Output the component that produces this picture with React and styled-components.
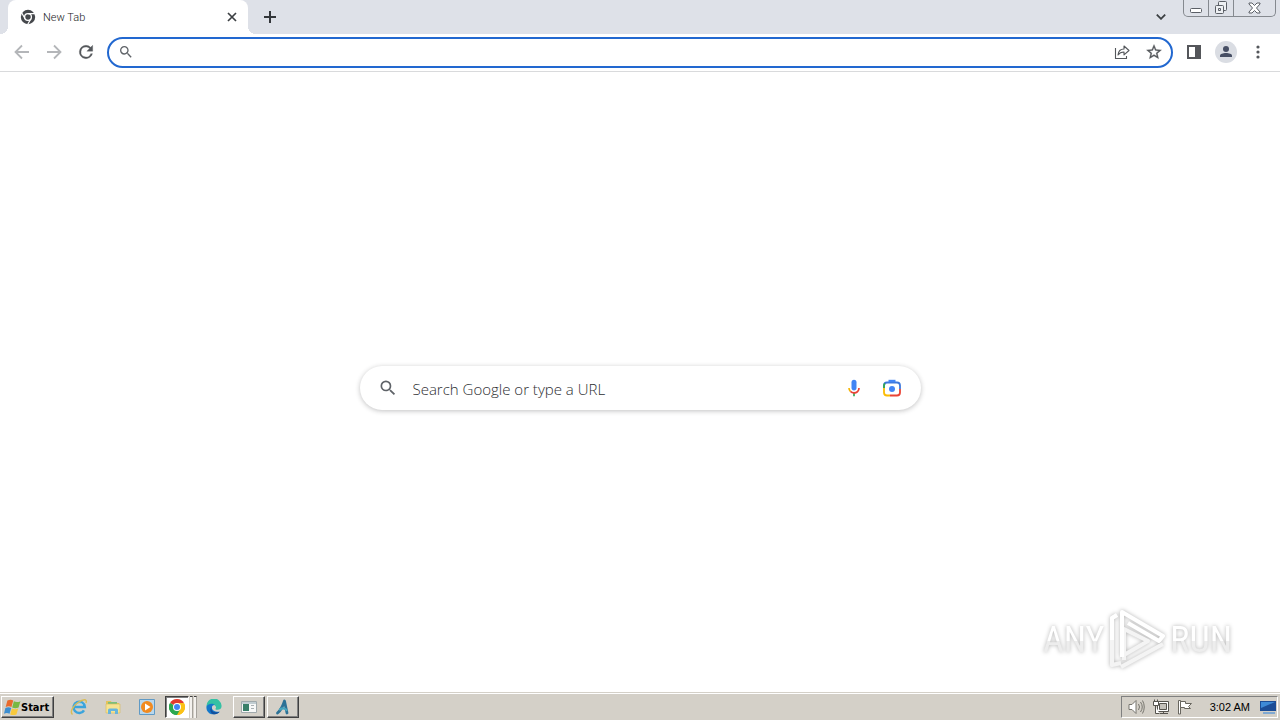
import React, { useState } from "react";
import styled, { createGlobalStyle, css } from "styled-components";

//styles
const GlobalStyle = createGlobalStyle`
    * {
        box-sizing: border-box;
    }

    body {
        margin: 0;
        background: #ffffff;
        font-family: Roboto, "Liberation Sans", sans-serif;
    }

    button {
        padding: 0;
        border: none;
        background: transparent;
        font: inherit;
    }

    svg {
        display: block;
        flex: none;
    }
`;

const Desktop = styled.div`
    display: flex;
    flex-direction: column;
    min-height: 100vh;
`;

const TabStrip = styled.header`
    display: flex;
    align-items: stretch;
    height: 34px;
    padding-left: 8px;
    background: #dee1e8;
`;

const Tab = styled.div`
    position: relative;
    display: flex;
    align-items: center;
    width: 240px;
    padding: 0 8px 0 12px;
    background: #ffffff;
    border-radius: 8px 8px 0 0;
    color: #202124;
    font-size: 11px;
    font-weight: 300;

    &::before,
    &::after {
        content: "";
        position: absolute;
        bottom: 0;
        width: 8px;
        height: 8px;
    }

    &::before {
        left: -8px;
        background: radial-gradient(circle at 0 0, transparent 8px, #ffffff 8px);
    }

    &::after {
        right: -8px;
        background: radial-gradient(circle at 100% 0, transparent 8px, #ffffff 8px);
    }
`;

const TabTitle = styled.span`
    flex: 1;
    margin-left: 7px;
`;

const IconButton = styled.button`
    display: flex;
    flex: none;
    align-items: center;
    justify-content: center;
    width: ${({ $size }) => $size || 32}px;
    height: ${({ $size }) => $size || 30}px;
    color: ${({ $muted }) => ($muted ? "#b4b6b9" : "#54575b")};
    border-radius: 50%;
`;

const NewTabButton = styled(IconButton)`
    align-self: center;
    margin-left: 6px;
    color: #33363a;
`;

const TabSearchButton = styled(IconButton)`
    align-self: center;
    margin: 0 6px 0 auto;
    color: #3c4043;
`;

const WindowControls = styled.div`
    display: flex;
    width: 93px;
    height: 17px;
    margin-right: 4px;
    border: 1px solid #85898f;
    border-top: none;
    border-radius: 0 0 5px 5px;
`;

const WindowButton = styled.button`
    display: flex;
    flex: ${({ $wide }) => ($wide ? "0 0 42px" : "1")};
    align-items: center;
    justify-content: center;
    color: #5b5f66;

    & + & {
        border-left: 1px solid #85898f;
    }
`;

const Toolbar = styled.div`
    display: flex;
    align-items: flex-start;
    height: 38px;
    padding: 3px 6px 0;
    border-bottom: 1px solid #d9dadc;
    background: #ffffff;
`;

const AddressBar = styled.div`
    display: flex;
    flex: 1;
    align-items: flex-start;
    height: 31px;
    margin: 0 5px;
    padding: 0 1px 0 9px;
    border: 2px solid #2268d0;
    border-radius: 16px;
    color: #5f6368;
`;

const AddressField = styled.label`
    display: flex;
    flex: 1;
    align-items: center;
    height: 26px;
`;

const AddressInput = styled.input`
    flex: 1;
    min-width: 0;
    margin-left: 8px;
    border: none;
    outline: none;
    background: transparent;
    font: 14px Roboto, sans-serif;
`;

const AddressAction = styled(IconButton)`
    height: 26px;
`;

const Page = styled.main`
    position: relative;
    display: flex;
    flex: 1;
    align-items: center;
    justify-content: center;
    padding-top: 12px;
`;

const SearchBox = styled.label`
    display: flex;
    align-items: center;
    width: 561px;
    max-width: 90%;
    height: 44px;
    padding: 0 10px 0 18px;
    border-radius: 22px;
    box-shadow: 0 1px 5px rgba(32, 33, 36, 0.28);
    color: #5f6368;
`;

const SearchInput = styled.input`
    flex: 1;
    min-width: 0;
    margin-left: 15px;
    padding: 2px 0 0;
    border: none;
    outline: none;
    background: transparent;
    color: #202124;
    font: 300 15px "Open Sans", "Noto Sans", sans-serif;

    &::placeholder {
        color: #2c2e31;
        opacity: 1;
    }
`;

const Watermark = styled.div`
    position: absolute;
    right: 48px;
    bottom: 20px;
    display: flex;
    align-items: center;
    gap: 5px;
    font: 36px/64px "Roboto Condensed", "Liberation Sans Narrow", "Open Sans Condensed", Roboto, sans-serif;
    filter: drop-shadow(0 0 2px rgba(0, 0, 0, 0.3));
`;

const WatermarkText = styled.span`
    background: linear-gradient(#ffffff 52%, #ededed 52%);
    background-clip: text;
    color: transparent;
`;

const Taskbar = styled.footer`
    display: flex;
    align-items: center;
    height: 28px;
    padding: 3px 2px 2px 1px;
    border-top: 1px solid #d4d0c8;
    background: #d4d0c8;
    box-shadow: inset 0 1px #ffffff;
    color: #000000;
    font: 11px "Liberation Sans", sans-serif;
`;

const raised = css`
    border: 1px solid;
    border-color: #ffffff #404040 #404040 #ffffff;
    box-shadow: inset -1px -1px #808080;
`;

const StartButton = styled.button`
    display: flex;
    align-items: center;
    width: 53px;
    height: 22px;
    padding-left: 2px;
    ${raised}

    && {
        font: bold 11px "DejaVu Sans Condensed", "DejaVu Sans", sans-serif;
    }
`;

const QuickLaunch = styled.nav`
    display: flex;
    align-items: center;
    margin-left: 8px;
`;

const LaunchButton = styled.button`
    display: flex;
    align-items: center;
    justify-content: center;
    width: 34px;
    height: 22px;
`;

const ActiveGroup = styled.div`
    display: flex;
    gap: 1px;
    width: 32px;
    height: 22px;
    margin-left: 1px;
`;

const ActiveButton = styled.button`
    display: flex;
    flex: 1;
    align-items: center;
    justify-content: center;
    border: 1px solid;
    border-color: #404040 #ffffff #ffffff #404040;
    background: #ffffff;
    box-shadow: inset 1px 1px #808080;
`;

const StackEdge = styled.span`
    width: 3px;
    border-top: 1px solid #404040;
    border-right: 1px solid #a5a29b;
    background: #f4f2ee;
`;

const TaskButton = styled.button`
    display: flex;
    align-items: center;
    justify-content: center;
    width: 32px;
    height: 22px;
    margin-left: 2px;
    ${raised}
`;

const Tray = styled.div`
    display: flex;
    align-items: center;
    gap: 8px;
    height: 22px;
    margin-left: auto;
    padding: 0 1px 0 6px;
    border: 1px solid;
    border-color: #808080 #ffffff #ffffff #808080;
`;

const Clock = styled.time`
    margin: 0 2px 0 9px;
`;

//icons
const SearchIcon = ({ size }) => (
    <svg width={size} height={size} viewBox="0 0 24 24" fill="currentColor">
        <path d="M15.5 14h-.79l-.28-.27A6.47 6.47 0 0 0 16 9.5 6.5 6.5 0 1 0 9.5 16c1.61 0 3.09-.59 4.23-1.57l.27.28v.79l5 4.99L20.49 19l-4.99-5zm-6 0C7.01 14 5 11.99 5 9.5S7.01 5 9.5 5 14 7.01 14 9.5 11.99 14 9.5 14z" />
    </svg>
);

const ArrowIcon = ({ forward }) => (
    <svg width="16" height="16" viewBox="0 0 16 16" fill="none" stroke="currentColor" strokeWidth="1.8">
        <path d={forward ? "M1 8h13M8 1.5 14.5 8 8 14.5" : "M15 8H2M8 1.5 1.5 8 8 14.5"} />
    </svg>
);

const ReloadIcon = () => (
    <svg width="20" height="20" viewBox="0 0 24 24" fill="currentColor" stroke="currentColor" strokeWidth=".4">
        <path d="M17.65 6.35A7.96 7.96 0 0 0 12 4a8 8 0 1 0 7.73 10h-2.08A6 6 0 1 1 12 6c1.66 0 3.14.69 4.22 1.78L13 11h7V4z" />
    </svg>
);

const ShareIcon = () => (
    <svg width="16" height="16" viewBox="0 0 16 16" fill="none" stroke="currentColor" strokeWidth="1.1">
        <path d="M1.5 4v10.5h11V12" />
        <path d="M4 11c.4-4 2.6-6 6-6V2l5 4.5-5 4.3V8C7.4 8 5.5 8.8 4 11z" strokeLinejoin="round" />
    </svg>
);

const StarIcon = () => (
    <svg width="18" height="18" viewBox="0 0 24 24" fill="currentColor" stroke="currentColor" strokeWidth=".4">
        <path d="M22 9.24l-7.19-.62L12 2 9.19 8.63 2 9.24l5.46 4.73L5.82 21 12 17.27 18.18 21l-1.63-7.03L22 9.24zM12 15.4l-3.76 2.27 1-4.28-3.32-2.88 4.38-.38L12 6.1l1.71 4.04 4.38.38-3.32 2.88 1 4.28L12 15.4z" />
    </svg>
);

const PanelIcon = () => (
    <svg width="14" height="14" viewBox="0 0 14 14">
        <path d="M0 0h14v14H0zm2 2v10h6V2z" fill="#54565a" fillRule="evenodd" />
    </svg>
);

const ProfileIcon = () => (
    <svg width="22" height="22" viewBox="0 0 22 22">
        <circle cx="11" cy="11" r="11" fill="#dadde3" />
        <circle cx="11" cy="8" r="3" fill="#474f64" />
        <path d="M5 16v-1.3C5 12.9 8 12 11 12s6 .9 6 2.7V16z" fill="#474f64" />
    </svg>
);

const MenuIcon = () => (
    <svg width="4" height="16" viewBox="0 0 4 16" fill="currentColor">
        <circle cx="2" cy="3" r="1.6" />
        <circle cx="2" cy="8" r="1.6" />
        <circle cx="2" cy="13" r="1.6" />
    </svg>
);

const TabChromeIcon = () => (
    <svg width="16" height="16" viewBox="0 0 16 16">
        <circle cx="8" cy="8" r="7.2" fill="#45484c" />
        <circle cx="8" cy="8" r="3.4" fill="#45484c" stroke="#ffffff" strokeWidth="1.3" />
        <path d="M8 4.6h7M5.1 9.7 1.6 3.7M10.9 9.7 7.5 15.7" stroke="#ffffff" strokeWidth="1.2" />
    </svg>
);

const ChromeIcon = () => (
    <svg width="16" height="16" viewBox="0 0 16 16">
        <path d="M8 8 1.07 4A8 8 0 0 1 14.93 4z" fill="#e33b2e" />
        <path d="M8 8 14.93 4A8 8 0 0 1 8 16z" fill="#fbc116" />
        <path d="M8 8v8A8 8 0 0 1 1.07 4z" fill="#2da94f" />
        <path d="M8 4h6.93A8 8 0 0 1 8 16l3.46-6z" fill="#fbc116" />
        <path d="M1.07 4 4.54 10A4 4 0 0 0 11.46 10L8 16A8 8 0 0 1 1.07 4z" fill="#2da94f" />
        <circle cx="8" cy="8" r="4" fill="#ffffff" />
        <circle cx="8" cy="8" r="3" fill="#4285f4" />
    </svg>
);

const MicIcon = () => (
    <svg width="20" height="20" viewBox="0 0 24 24">
        <path d="M12 15c1.66 0 3-1.31 3-2.97V4.98a3 3 0 1 0-6 0v7.05C9 13.69 10.34 15 12 15z" fill="#4285f4" />
        <path d="M11 18.08h2V22h-2z" fill="#34a853" />
        <path d="M7.05 16.87A6.9 6.9 0 0 1 5 12h2c0 1.45.56 2.42 1.47 3.38z" fill="#f4b400" />
        <path d="M12 16.93a4.97 4.97 0 0 1-3.54-1.55l-1.41 1.49A6.9 6.9 0 0 0 12 19c3.87 0 6.99-2.92 6.99-7H17c0 2.92-2.24 4.93-5 4.93z" fill="#ea4335" />
    </svg>
);

const LensIcon = () => (
    <svg width="18" height="18" viewBox="0 0 18 18" fill="none" strokeWidth="1.8">
        <path d="M1 9V6.5a3 3 0 0 1 3-3h10a3 3 0 0 1 3 3V10" stroke="#3d78dc" />
        <path d="M5.5 2h7" stroke="#4285f4" strokeWidth="2.4" />
        <path d="M1 9v4.5a3 3 0 0 0 3 3h3" stroke="#fbbc04" />
        <path d="M1 9V6.5a3 3 0 0 1 1-2.2" stroke="#34a853" />
        <path d="M7 16.5h7a3 3 0 0 0 3-3V10" stroke="#ea4335" />
        <circle cx="9" cy="10" r="3" fill="#4285f4" />
    </svg>
);

const PlayLogo = () => (
    <svg width="56" height="62" viewBox="0 0 56 62" fill="none" stroke="#ffffff" strokeWidth="4" strokeLinejoin="round">
        <path d="M12 54l-9 2V9l5-3" stroke="#f4f4f4" />
        <path d="M3 31V9l5-3" />
        <path d="M15 51V20l24 12-24 14" stroke="#f4f4f4" />
        <path d="M12 58 54 35" stroke="#f4f4f4" />
        <path d="M13 48V3l41 24-4 5-31-18" />
    </svg>
);

const WindowsIcon = () => (
    <svg width="17" height="17" viewBox="0 0 16 16">
        <path d="M3.2 1.5c2.2-1.100 3.900-1.100 5.500 0L7 7.500c-1.700-1-3.400-1-5.400 0z" fill="#e96a2c" />
        <path d="M9.300 2.200c2 .9 4.100.9 6.200-.2l-1.800 6c-1.900.9-4.100.9-6 0z" fill="#78b843" />
        <path d="M1.300 8.400c2.200-1 3.900-.9 5.500 0l-1.600 5.500c-1.700-1-3.400-1-5.200 0z" fill="#3d8ed0" />
        <path d="M7.500 8.900c1.900.9 4 1 5.900.1l-1.700 5.500c-1.900.9-3.900.9-5.900 0z" fill="#f8c93c" />
    </svg>
);

const ExplorerIcon = () => (
    <svg width="18" height="18" viewBox="0 0 18 18" fill="none">
        <path d="M14 12.300a5.600 5.600 0 1 1 .8-3.300H5" stroke="#3ba4dc" strokeWidth="2.600" />
        <path d="M4.500 7.500C6 4.500 11 4 13 7" stroke="#8ed3f2" />
        <path d="M2.500 16.500C-.5 14 3 8 8 4.500S17.500.5 16 5" stroke="#d9bc55" strokeWidth="1.400" />
    </svg>
);

const FolderIcon = () => (
    <svg width="16" height="16" viewBox="0 0 16 16">
        <path d="M1 2h5l1 2h7v9H1z" fill="#e5c45a" />
        <path d="M3 3h9v4H3z" fill="#7cbf7b" />
        <path d="M1 5h14v9H1z" fill="#f6e391" stroke="#d7b85a" strokeWidth=".6" />
        <path d="M3 15v-4q0-1.500 1.500-1.500h7Q13 9.500 13 11v4h-3v-3H6v3z" fill="#67b5dc" />
    </svg>
);

const MediaIcon = () => (
    <svg width="16" height="16" viewBox="0 0 16 16">
        <path d="M.5.5h15v15H.5z" fill="#b9d7ec" stroke="#609ac5" />
        <circle cx="8" cy="8" r="6" fill="#f18a1f" />
        <path d="m6 4.500 5.500 3.500L6 11.500z" fill="#ffffff" />
    </svg>
);

const EdgeIcon = () => (
    <svg width="16" height="16" viewBox="0 0 17 17">
        <path d="M.5 8a8 8 0 0 1 16-1c.4 3-1.8 4.6-4.6 4.5-1.5 0-2.3-.7-1.5-1.6C11.500 8 9 5.500 6 5.500 3.500 5.500 1.500 6.500.5 8z" fill="#35c1a4" />
        <path d="M.5 8C2 5 7 4 9.500 6.500 5 6 4 14 14.500 13.500 9 19-.3 16 .5 8z" fill="#1478ca" />
        <path d="M6 8.500c-1.500 4 3 7 8.500 5-2 3-7 3.500-9 1-1.500-2-1-4.500.5-6z" fill="#124f9d" />
    </svg>
);

const AppWindowIcon = () => (
    <svg width="16" height="12" viewBox="0 0 16 12">
        <path d="M.5.5h15v11H.5z" fill="#f7f8f8" stroke="#a0a9ac" />
        <path d="M1 1h14v2H1z" fill="#c1cdd2" />
        <path d="M2 3h6v7H2z" fill="#397f69" />
        <path d="M10 4h3v1h-3zm0 3h3v1h-3z" fill="#a9b0b3" />
    </svg>
);

const AppMarkIcon = () => (
    <svg width="16" height="16" viewBox="0 0 16 16" fill="none" strokeLinecap="round">
        <path d="M2.500 14C6 11 8 7 9.500 2l2.500 12" stroke="#2b7196" strokeWidth="2.800" strokeLinejoin="round" />
        <path d="M5 10.500c3-2 4.500-1.500 6.500.5" stroke="#45a5bf" strokeWidth="2.200" />
    </svg>
);

const SpeakerIcon = () => (
    <svg width="17" height="16" viewBox="0 0 17 16" fill="none" stroke="#77756e">
        <path d="M1 5.500h3l4-4v13l-4-4H1z" fill="#ffffff" />
        <path d="M10.500 5q2 3 0 6M12.500 3q3.500 5 0 10M14.500 1.500q3.500 6.500 0 13" />
    </svg>
);

const NetworkIcon = () => (
    <svg width="16" height="16" viewBox="0 0 16 16" fill="#ffffff" stroke="#55534d">
        <path d="M4.500 2.500h11v10h-11z" />
        <path d="M6.500 4.500h7v6h-7z" fill="#c4c1ba" />
        <path d="M7 14.500h8M10.500 12.500v2" />
        <path d="M.5 2.500h5v4h-5zM1.500.5v2M4.500.5v2M2.500 7v7.500h4" />
    </svg>
);

const FlagIcon = () => (
    <svg width="16" height="16" viewBox="0 0 16 16" fill="#ffffff" stroke="#68665f">
        <path d="M1.500 15V1.500h2V15z" />
        <path d="M3.500 2.500h5v2h6l-3 3 2 2h-6v-1h-4z" />
    </svg>
);

const DisplayIcon = () => (
    <svg width="16" height="16" viewBox="0 0 16 16">
        <path d="M0 2h16v10H0z" fill="#1c4d96" />
        <path d="M1 3h14L1 9z" fill="#3e8ad6" />
        <path d="M3 13h12v2H3z" fill="#80a9d2" />
    </svg>
);

//page component
const App = () => {
    const [address, setAddress] = useState("");
    const [query, setQuery] = useState("");

    return (
        <Desktop>
            <GlobalStyle />
            <TabStrip>
                <Tab>
                    <TabChromeIcon />
                    <TabTitle>New Tab</TabTitle>
                    <IconButton $size={16} aria-label="Close tab">
                        <svg width="10" height="10" viewBox="0 0 10 10" stroke="#3c4043" strokeWidth="1.7">
                            <path d="m1 1 8 8M9 1 1 9" />
                        </svg>
                    </IconButton>
                </Tab>
                <NewTabButton aria-label="New tab">
                    <svg width="12" height="12" viewBox="0 0 12 12" stroke="currentColor" strokeWidth="2">
                        <path d="M6 0v12M0 6h12" />
                    </svg>
                </NewTabButton>
                <TabSearchButton aria-label="Search tabs">
                    <svg width="10" height="6" viewBox="0 0 10 6" fill="none" stroke="currentColor" strokeWidth="1.8">
                        <path d="m.8.6 4.2 4.2L9.2.6" />
                    </svg>
                </TabSearchButton>
                <WindowControls>
                    <WindowButton aria-label="Minimize">
                        <svg width="12" height="14" viewBox="0 0 12 14" fill="#ffffff" stroke="currentColor">
                            <rect x=".5" y="7.5" width="11" height="4" rx="1" />
                        </svg>
                    </WindowButton>
                    <WindowButton aria-label="Restore">
                        <svg width="14" height="14" viewBox="0 0 14 14" fill="#eef0f3" stroke="currentColor">
                            <rect x="4.5" y=".5" width="8" height="9" rx="1" />
                            <rect x="1.500" y="4.500" width="8" height="8" rx="1" />
                            <path d="M4.500 7.500h2v2h-2z" />
                        </svg>
                    </WindowButton>
                    <WindowButton $wide aria-label="Close">
                        <svg width="13" height="12" viewBox="0 0 13 12" fill="#ffffff" stroke="currentColor">
                            <path d="M1 1h3l2.500 2.500L9 1h3v1L8.500 6l3.500 4v1H9L6.500 8.500 4 11H1v-1l3.500-4L1 2z" />
                        </svg>
                    </WindowButton>
                </WindowControls>
            </TabStrip>
            <Toolbar>
                <IconButton $muted aria-label="Back"><ArrowIcon /></IconButton>
                <IconButton $muted aria-label="Forward"><ArrowIcon forward /></IconButton>
                <IconButton aria-label="Reload"><ReloadIcon /></IconButton>
                <AddressBar>
                    <AddressField>
                        <SearchIcon size={16} />
                        <AddressInput
                            aria-label="Address and search bar"
                            value={address}
                            onChange={(e) => setAddress(e.target.value)}
                        />
                    </AddressField>
                    <AddressAction aria-label="Share this page"><ShareIcon /></AddressAction>
                    <AddressAction aria-label="Bookmark this tab"><StarIcon /></AddressAction>
                </AddressBar>
                <IconButton aria-label="Side panel"><PanelIcon /></IconButton>
                <IconButton aria-label="Profile"><ProfileIcon /></IconButton>
                <IconButton aria-label="Menu"><MenuIcon /></IconButton>
            </Toolbar>
            <Page>
                <SearchBox>
                    <SearchIcon size={20} />
                    <SearchInput
                        aria-label="Search Google or type a URL"
                        placeholder="Search Google or type a URL"
                        value={query}
                        onChange={(e) => setQuery(e.target.value)}
                    />
                    <IconButton $size={38} aria-label="Search by voice"><MicIcon /></IconButton>
                    <IconButton $size={38} aria-label="Search by image"><LensIcon /></IconButton>
                </SearchBox>
                <Watermark>
                    <WatermarkText>ANY</WatermarkText>
                    <PlayLogo />
                    <WatermarkText>RUN</WatermarkText>
                </Watermark>
            </Page>
            <Taskbar>
                <StartButton>
                    <WindowsIcon />
                    Start
                </StartButton>
                <QuickLaunch>
                    <LaunchButton aria-label="Internet Explorer"><ExplorerIcon /></LaunchButton>
                    <LaunchButton aria-label="Files"><FolderIcon /></LaunchButton>
                    <LaunchButton aria-label="Media Player"><MediaIcon /></LaunchButton>
                    <ActiveGroup>
                        <ActiveButton aria-label="Chrome"><ChromeIcon /></ActiveButton>
                        <StackEdge />
                        <StackEdge />
                    </ActiveGroup>
                    <LaunchButton aria-label="Edge"><EdgeIcon /></LaunchButton>
                </QuickLaunch>
                <TaskButton aria-label="Application"><AppWindowIcon /></TaskButton>
                <TaskButton aria-label="Agent"><AppMarkIcon /></TaskButton>
                <Tray>
                    <SpeakerIcon />
                    <NetworkIcon />
                    <FlagIcon />
                    <Clock>3:02 AM</Clock>
                    <DisplayIcon />
                </Tray>
            </Taskbar>
        </Desktop>
    );
};

export default App;
